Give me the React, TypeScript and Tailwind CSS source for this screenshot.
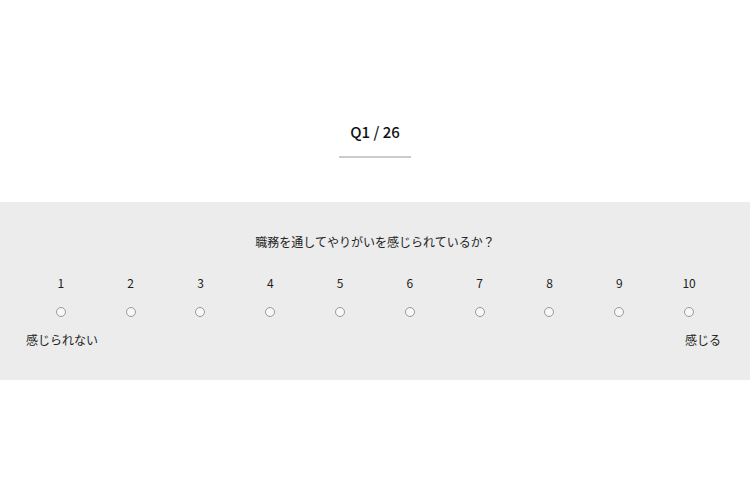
export default function App() {
  const nums = [1, 2, 3, 4, 5, 6, 7, 8, 9, 10];
  return (
    <div
      className="min-h-screen bg-white text-[#222]"
      style={{ fontFamily: '"Noto Sans CJK JP", "Noto Sans", sans-serif' }}
    >
      {/* Header */}
      <div className="pt-[120px] flex flex-col items-center">
        <h1 className="text-[15px] leading-[24px] font-medium text-[#111]">Q1 / 26</h1>
        <div className="mt-[12px] w-[72px] h-[2px] bg-[#cccccc]" />
      </div>

      {/* Question */}
      <section className="mt-[44px] bg-[#ececec] pt-[30px] pb-[30px] px-[26px]">
        <p className="text-center text-[12px] leading-[20px]">
          職務を通してやりがいを感じられているか？
        </p>

        <div className="mt-[21px] grid grid-cols-10">
          {nums.map((n) => (
            <div key={n} className="text-center text-[12px] leading-[20px]">
              {n}
            </div>
          ))}
        </div>

        <div className="mt-[14px] grid grid-cols-10">
          {nums.map((n) => (
            <div key={n} className="flex justify-center">
              <span className="block w-[10px] h-[10px] rounded-full border border-[#999] bg-[#f7f7f7]" />
            </div>
          ))}
        </div>

        <div className="mt-[13px] flex justify-between text-[12px] leading-[20px]">
          <span>感じられない</span>
          <span className="pr-[3px]">感じる</span>
        </div>
      </section>
    </div>
  );
}
